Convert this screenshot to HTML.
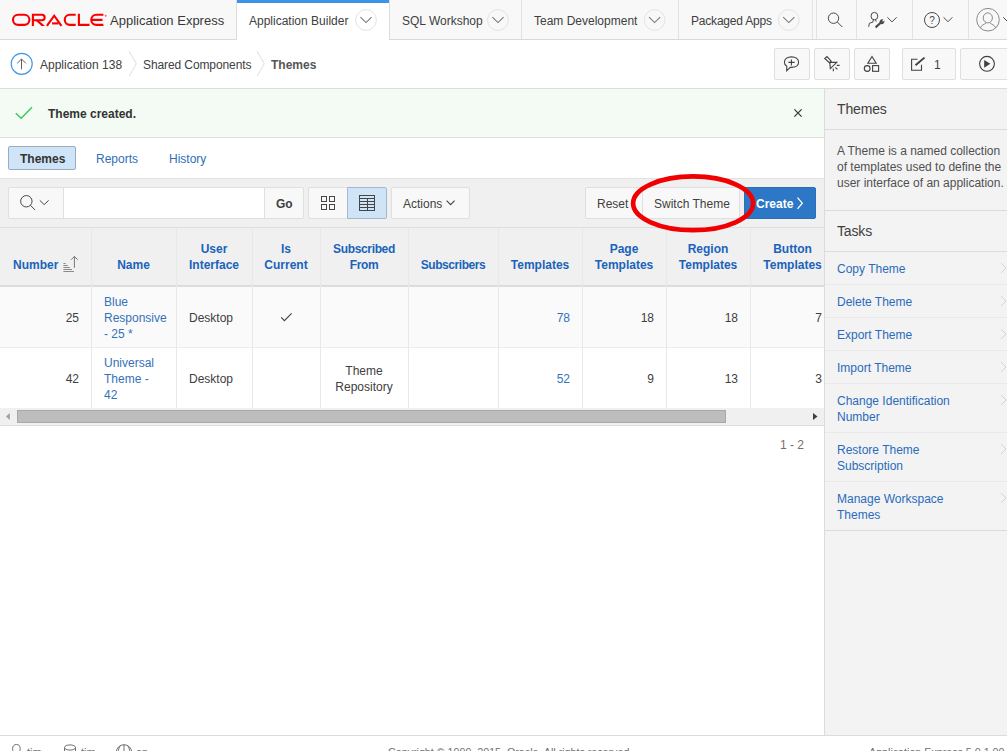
<!DOCTYPE html>
<html><head><meta charset="utf-8">
<style>
*{box-sizing:border-box;margin:0;padding:0}
html,body{width:1007px;height:751px;overflow:hidden;background:#fff;font-family:"Liberation Sans",sans-serif;font-size:12px;color:#404040}
.a{position:absolute}
.t{position:absolute;white-space:nowrap;line-height:16px}
.b{font-weight:bold}
svg{position:absolute;overflow:visible}
.btn{background:#f8f8f8;border:1px solid #dfdfdf;border-radius:2px}
.tl{position:absolute;left:837px;white-space:nowrap;line-height:16px;color:#2a6bbb}
.sep{left:825px;width:182px;height:1px;background:#e9e9e9}
.vl{top:228px;width:1px;height:180px;background:#e8e8e8}
.th{position:absolute;text-align:center;font-weight:bold;color:#1a63bb;line-height:16px;white-space:nowrap}
.td{position:absolute;line-height:16px;white-space:nowrap;color:#404040}
.td.r{text-align:right}
.td.c{text-align:center}
.lk{color:#3572b9}
</style></head><body>
<!-- HEADER -->
<div class="a" style="left:0;top:0;width:1007px;height:40px;background:#f8f8f8;border-bottom:1px solid #d9d9d9"></div>
<svg style="left:0;top:0" width="240" height="40" viewBox="0 0 240 40">
<g fill="none" stroke="#f80000" stroke-width="2.1">
<rect x="13" y="14.8" width="16.4" height="10.1" rx="5.05"/>
<path d="M32.9 13.75V25.95M32.9 14.8H41.95A2.7 2.7 0 0 1 41.95 20.2H33"/>
<path d="M46.9 25.95L54.2 15.7L61.5 25.95" stroke-linejoin="miter"/>
<path d="M52 23.4H58.6"/>
<path d="M75.7 14.8H69.8A5.05 5.05 0 0 0 69.8 24.9H75.7"/>
<path d="M78.9 13.75V24.9H89.5"/>
<path d="M103.4 14.8H96.3A5.05 5.05 0 0 0 96.3 24.9H103.4M91.5 19.85H102.5"/>
</g>
<polygon fill="#f80000" points="35.2,20.2 38.4,20.2 45,25.95 41.6,25.95"/>
<circle cx="105.7" cy="15.8" r="1" fill="#f86060"/>
</svg>
<div class="t" style="left:110px;top:13px;font-size:13px;color:#383838">Application Express</div>

<!-- active tab -->
<div class="a" style="left:236px;top:0;width:154px;height:40px;background:#fff;border-left:1px solid #dcdcdc;border-right:1px solid #dcdcdc"></div>
<div class="a" style="left:237px;top:0;width:152px;height:3px;background:#3b93e6"></div>
<div class="t" style="left:249px;top:13px">Application Builder</div>
<div class="t" style="left:402px;top:13px">SQL Workshop</div>
<div class="t" style="left:534px;top:13px">Team Development</div>
<div class="t" style="left:691px;top:13px;letter-spacing:-0.2px">Packaged Apps</div>
<div class="a" style="left:521px;top:0;width:1px;height:39px;background:#e2e2e2"></div>
<div class="a" style="left:678px;top:0;width:1px;height:39px;background:#e2e2e2"></div>
<div class="a" style="left:812px;top:0;width:1px;height:39px;background:#e2e2e2"></div>
<div class="a" style="left:816px;top:0;width:1px;height:39px;background:#e2e2e2"></div>
<div class="a" style="left:856px;top:0;width:1px;height:39px;background:#e2e2e2"></div>
<div class="a" style="left:912px;top:0;width:1px;height:39px;background:#e2e2e2"></div>
<div class="a" style="left:968px;top:0;width:1px;height:39px;background:#e2e2e2"></div>
<svg style="left:0;top:0" width="1007" height="40" viewBox="0 0 1007 40">
<g fill="none" stroke="#e4e4e4" stroke-width="1">
<circle cx="366" cy="20" r="10.4"/>
<circle cx="498" cy="20" r="10.4"/>
<circle cx="654.6" cy="20" r="10.4"/>
<circle cx="788.8" cy="20" r="10.4"/>
</g>
<g fill="none" stroke="#7a7a7a" stroke-width="1.1">
<path d="M360.4 17.2L366 22.6L371.6 17.2"/>
<path d="M492.4 17.2L498 22.6L503.6 17.2"/>
<path d="M649 17.2L654.6 22.6L660.2 17.2"/>
<path d="M783.2 17.2L788.8 22.6L794.4 17.2"/>
</g>
<g fill="none" stroke="#4a4a4a" stroke-width="1">
<circle cx="833.5" cy="18.2" r="5.2"/>
<path d="M837.3 22L842.3 27"/>
<ellipse cx="874.4" cy="16.1" rx="3.4" ry="3.7"/>
<path d="M873.3 20L872.8 22.2L869.4 23.2L868.7 26.8M875.6 20L876.2 21.6"/>
<path d="M887.4 17.3L892 21.9L896.6 17.3"/>
<circle cx="932" cy="20" r="7.5"/>
<path d="M943.6 17.3L948 21.7L952.4 17.3"/>
<path d="M1003.3 17.3L1007.7 21.7"/>
</g>
<path d="M875.6 27.4L880.7 22.7" stroke="#4a4a4a" stroke-width="2.2" fill="none"/>
<path d="M879.8 23A2.6 2.6 0 0 1 883.4 19.6L882.2 21L883 21.8L884.3 20.6A2.6 2.6 0 0 1 880.6 23.8Z" fill="#4a4a4a"/>
<text x="932" y="23.9" font-family="Liberation Sans" font-size="10" text-anchor="middle" fill="#4a4a4a">?</text>
<g fill="none" stroke="#8a8a8a" stroke-width="1">
<circle cx="988" cy="19.7" r="11.3"/>
<ellipse cx="987.8" cy="17.9" rx="4.6" ry="5"/>
<path d="M980.3 27.9C981.5 25 984 24.6 986 23M995.8 27.9C994.5 25 992 24.6 990 23"/>
</g>
</svg>

<!-- BREADCRUMB -->
<div class="a" style="left:0;top:88px;width:1007px;height:1px;background:#dcdcdc"></div>
<div class="t" style="left:40px;top:57px">Application 138</div>
<div class="t" style="left:143px;top:57px;letter-spacing:-0.1px">Shared Components</div>
<div class="t b" style="left:271px;top:57px;color:#555">Themes</div>
<svg style="left:0;top:40px" width="1007" height="48" viewBox="0 40 1007 48">
<circle cx="21.7" cy="63.8" r="10.5" fill="none" stroke="#4296e4" stroke-width="1.15"/>
<path d="M21.5 69.3V59M17.2 63.3L21.5 59L25.8 63.3" fill="none" stroke="#606060" stroke-width="1"/>
<path d="M129.3 51.4L136.3 63.8L129.3 76M257.2 51.4L264.3 63.8L257.2 76" fill="none" stroke="#dedede" stroke-width="1"/>
</svg>
<div class="a btn" style="left:774px;top:48px;width:36px;height:32px"></div>
<div class="a btn" style="left:814px;top:48px;width:36px;height:32px"></div>
<div class="a btn" style="left:854px;top:48px;width:36px;height:32px"></div>
<div class="a btn" style="left:902px;top:48px;width:54px;height:32px"></div>
<div class="a btn" style="left:960px;top:48px;width:60px;height:32px"></div>
<svg style="left:0;top:40px" width="1007" height="48" viewBox="0 40 1007 48">
<g fill="none" stroke="#404040" stroke-width="1.1">
<path d="M786.8 66.3C784.8 65.2 784.4 63.8 784.4 62.2C784.4 58.9 787.6 56.9 791.5 56.9C795.4 56.9 798.6 58.9 798.6 62.2C798.6 65.5 795.4 67.4 791.5 67.4L790.3 67.4L786.7 70.8Z"/>
<path d="M788.4 62.4H794.6M791.4 59.4V65.4"/>
<path d="M824.8 58.5L827 56.6L831.2 61.2L829.6 62.9Z"/>
<path d="M829.8 62.4L836.8 62.3L830.3 68.6Z"/>
<path d="M836.8 65.4H839.6M835.3 67.3L837.4 69.3M833.3 68.5V71.2"/>
<path d="M872 56.5L876.2 63.3H867.8Z"/>
<circle cx="867.2" cy="68.5" r="2.9"/>
<rect x="872.6" y="65.6" width="6" height="5.7"/>
<path d="M917.5 59.3H911.6V70.3H921.5V64.7"/>
<path d="M962 63.8" />
<circle cx="987" cy="63.8" r="7.4"/>
</g>
<path d="M915.5 65.3L924.5 57.6" stroke="#404040" stroke-width="1.9" fill="none"/>
<path d="M984.2 60L990.3 63.8L984.2 67.7Z" fill="#404040"/>
</svg>
<div class="t" style="left:934px;top:57px">1</div>

<!-- RIGHT PANEL -->
<div class="a" style="left:824px;top:89px;width:183px;height:646px;background:#f3f3f3;border-left:1px solid #dcdcdc"></div>
<div class="t" style="left:837px;top:101px;font-size:14px;letter-spacing:-0.15px;color:#404040">Themes</div>
<div class="a" style="left:825px;top:129px;width:182px;height:1px;background:#dcdcdc"></div>
<div class="t" style="left:837px;top:143px;color:#505050">A Theme is a named collection</div>
<div class="t" style="left:837px;top:159px;color:#505050">of templates used to define the</div>
<div class="t" style="left:837px;top:175px;color:#505050">user interface of an application.</div>
<div class="a" style="left:825px;top:210px;width:182px;height:1px;background:#dcdcdc"></div>
<div class="t" style="left:837px;top:223px;font-size:14px;letter-spacing:-0.15px;color:#404040">Tasks</div>
<div class="a" style="left:825px;top:251px;width:182px;height:1px;background:#dcdcdc"></div>
<div class="tl" style="top:261px">Copy Theme</div>
<div class="a sep" style="top:284px"></div>
<div class="tl" style="top:294px">Delete Theme</div>
<div class="a sep" style="top:317px"></div>
<div class="tl" style="top:327px">Export Theme</div>
<div class="a sep" style="top:350px"></div>
<div class="tl" style="top:360px">Import Theme</div>
<div class="a sep" style="top:383px"></div>
<div class="tl" style="top:393px">Change Identification<br>Number</div>
<div class="a sep" style="top:432px"></div>
<div class="tl" style="top:442px">Restore Theme<br>Subscription</div>
<div class="a sep" style="top:481px"></div>
<div class="tl" style="top:491px">Manage Workspace<br>Themes</div>
<div class="a" style="left:825px;top:530px;width:182px;height:1px;background:#dcdcdc"></div>
<svg style="left:990px;top:250px" width="17" height="280" viewBox="990 250 17 280">
<path d="M1001 263L1006 268L1001 273M1001 296L1006 301L1001 306M1001 329L1006 334L1001 339M1001 362L1006 367L1001 372M1001 395L1006 400L1001 405M1001 444L1006 449L1001 454M1001 493L1006 498L1001 503" fill="none" stroke="#d4d4d4" stroke-width="1"/>
</svg>

<!-- ALERT -->
<div class="a" style="left:0;top:89px;width:824px;height:49px;background:#f4fbf4;border-bottom:1px solid #dfdfdf"></div>
<div class="t b" style="left:48px;top:106px;color:#333">Theme created.</div>
<svg style="left:0;top:89px" width="824" height="49" viewBox="0 89 824 49">
<path d="M15.8 113.3L21.2 118.2L32 107.2" fill="none" stroke="#3ec85a" stroke-width="1.5"/>
<path d="M794.4 109.4L801.6 116.6M801.6 109.4L794.4 116.6" fill="none" stroke="#333" stroke-width="1.2"/>
</svg>

<!-- TABS -->
<div class="a" style="left:8px;top:146px;width:68px;height:24px;background:#d0e4f8;border:1px solid #97adc4;border-radius:2px"></div>
<div class="t b" style="left:20px;top:151px;color:#333">Themes</div>
<div class="t" style="left:96px;top:151px;color:#2f6fb7">Reports</div>
<div class="t" style="left:169px;top:151px;color:#2f6fb7">History</div>

<!-- TOOLBAR -->
<div class="a" style="left:0;top:178px;width:824px;height:49px;background:#f0f0f0;border-top:1px solid #e2e2e2"></div>
<div class="a btn" style="left:8px;top:187px;width:56px;height:32px;border-radius:2px 0 0 2px"></div>
<div class="a" style="left:63px;top:187px;width:202px;height:32px;background:#fff;border:1px solid #dfdfdf"></div>
<div class="a btn" style="left:264px;top:187px;width:40px;height:32px;border-radius:0 2px 2px 0"></div>
<div class="t b" style="left:276px;top:196px;color:#404040">Go</div>
<div class="a btn" style="left:308px;top:187px;width:40px;height:32px;border-radius:2px 0 0 2px"></div>
<div class="a" style="left:347px;top:187px;width:40px;height:32px;background:#d0e4f8;border:1px solid #a3b8cf;border-radius:0 2px 2px 0"></div>
<div class="a btn" style="left:391px;top:187px;width:79px;height:32px"></div>
<div class="t" style="left:403px;top:196px;color:#404040">Actions</div>
<div class="a btn" style="left:585px;top:187px;width:58px;height:32px"></div>
<div class="t" style="left:597px;top:196px;color:#404040">Reset</div>
<div class="a btn" style="left:642px;top:187px;width:98px;height:32px"></div>
<div class="t" style="left:654px;top:196px;color:#404040">Switch Theme</div>
<div class="a" style="left:744px;top:187px;width:72px;height:32px;background:#2d78c6;border:1px solid #2a6fb8;border-radius:2px"></div>
<div class="t b" style="left:756px;top:196px;color:#fff">Create</div>
<svg style="left:0;top:178px" width="824" height="49" viewBox="0 178 824 49">
<g fill="none" stroke="#454545" stroke-width="1">
<circle cx="26.35" cy="201.25" r="5.7"/>
<path d="M30.4 205.3L35 209.9"/>
<path d="M39.8 200.4L44.2 204.6L48.6 200.4"/>
</g><g fill="none" stroke="#454545" stroke-width="1">
<rect x="321.5" y="196.5" width="5" height="5"/>
<rect x="329.5" y="196.5" width="5" height="5"/>
<rect x="321.5" y="204.5" width="5" height="5"/>
<rect x="329.5" y="204.5" width="5" height="5"/>
<rect x="359.5" y="195.5" width="15" height="15"/>
<path d="M359.5 198.5H374.5M359.5 201.5H374.5M359.5 204.5H374.5M359.5 207.5H374.5M367.5 198.5V210.5"/>
</g><g fill="none" stroke="#454545" stroke-width="1.1">
<path d="M446.6 200.6L450.6 204.6L454.6 200.6"/>
</g>

<path d="M797.5 197.6L802.3 203.2L797.5 208.8" fill="none" stroke="#fff" stroke-width="1.3"/>
</svg>

<!-- TABLE -->
<div class="a" style="left:0;top:227px;width:824px;height:60px;background:#f0f0f0;border-top:1px solid #dedede;border-bottom:2px solid #dcdcdc"></div>
<div class="a" style="left:0;top:287px;width:824px;height:61px;background:#fafafa;border-bottom:1px solid #ededed"></div>
<div class="a" style="left:0;top:348px;width:824px;height:60px;background:#fff"></div>
<div class="a vl" style="left:91px"></div>
<div class="a vl" style="left:176px"></div>
<div class="a vl" style="left:252px"></div>
<div class="a vl" style="left:320px"></div>
<div class="a vl" style="left:408px"></div>
<div class="a vl" style="left:498px"></div>
<div class="a vl" style="left:582px"></div>
<div class="a vl" style="left:666px"></div>
<div class="a vl" style="left:750px"></div>

<div class="th" style="left:0;width:79px;top:257px;text-align:left;padding-left:13px">Number</div>
<div class="th" style="left:91px;width:85px;top:257px">Name</div>
<div class="th" style="left:176px;width:76px;top:241px">User<br>Interface</div>
<div class="th" style="left:252px;width:68px;top:241px">Is<br>Current</div>
<div class="th" style="left:320px;width:88px;top:241px;letter-spacing:-0.35px">Subscribed<br>From</div>
<div class="th" style="left:408px;width:90px;top:257px;letter-spacing:-0.45px">Subscribers</div>
<div class="th" style="left:498px;width:84px;top:257px">Templates</div>
<div class="th" style="left:582px;width:84px;top:241px">Page<br>Templates</div>
<div class="th" style="left:666px;width:84px;top:241px">Region<br>Templates</div>
<div class="th" style="left:750px;width:85px;top:241px">Button<br>Templates</div>
<svg style="left:60px;top:250px" width="22" height="26" viewBox="60 250 22 26">
<path d="M63.4 263.5H65.7M63.4 265.5H67.8M63.4 267.5H69.9M63.4 269.5H72M63.4 271.5H74" stroke="#8a8a8a" stroke-width="1"/>
<path d="M74.4 267.8V256.4M71.1 259.7L74.4 256.4L77.7 259.7" fill="none" stroke="#777" stroke-width="1"/>
</svg>

<div class="td r" style="left:0;width:79px;top:310px">25</div>
<div class="td lk" style="left:104px;top:294px;line-height:16px">Blue<br>Responsive<br>- 25 *</div>
<div class="td" style="left:189px;top:310px">Desktop</div>
<svg style="left:270px;top:300px" width="30" height="30" viewBox="270 300 30 30">
<path d="M281.2 317.4L284.4 320.6L291.6 313.4" fill="none" stroke="#404040" stroke-width="1.1"/>
</svg>
<div class="td r lk" style="left:498px;width:72px;top:310px">78</div>
<div class="td r" style="left:582px;width:72px;top:310px">18</div>
<div class="td r" style="left:666px;width:72px;top:310px">18</div>
<div class="td r" style="left:750px;width:72px;top:310px">7</div>

<div class="td r" style="left:0;width:79px;top:371px">42</div>
<div class="td lk" style="left:104px;top:355px;line-height:16px">Universal<br>Theme -<br>42</div>
<div class="td" style="left:189px;top:371px">Desktop</div>
<div class="td c" style="left:320px;width:88px;top:363px;line-height:16px">Theme<br>Repository</div>
<div class="td r lk" style="left:498px;width:72px;top:371px">52</div>
<div class="td r" style="left:582px;width:72px;top:371px">9</div>
<div class="td r" style="left:666px;width:72px;top:371px">13</div>
<div class="td r" style="left:750px;width:72px;top:371px">3</div>

<!-- scrollbar -->
<div class="a" style="left:0;top:408px;width:824px;height:18px;background:#f0f0f0;border-bottom:1px solid #dcdcdc"></div>
<div class="a" style="left:17px;top:410px;width:709px;height:13px;background:#bdbdbd;border:1px solid #a9a9a9"></div>
<svg style="left:0;top:408px" width="824" height="18" viewBox="0 408 824 18">
<path d="M6 416.5L9.8 413V420Z" fill="#a0a0a0"/>
<path d="M813 412.9L817.5 416.4L813 420Z" fill="#404040"/>
</svg>
<div class="t" style="left:780px;top:437px;color:#707070">1 - 2</div>

<!-- FOOTER -->
<div class="a" style="left:0;top:735px;width:1007px;height:1px;background:#dcdcdc"></div>
<svg style="left:0;top:736px" width="200" height="15" viewBox="0 736 200 15">
<g fill="none" stroke="#707070" stroke-width="1">
<ellipse cx="16.4" cy="748.8" rx="3.8" ry="4.3"/>
<ellipse cx="70" cy="747.5" rx="5.5" ry="2.6"/>
<path d="M64.5 747.5V756M75.5 747.5V756"/>
<circle cx="124" cy="752.5" r="7.8"/>
<path d="M124 744.7V760M120.5 745.5C117.5 749 117.5 756 120.5 759.5M127.5 745.5C130.5 749 130.5 756 127.5 759.5"/>
</g>
</svg>
<div class="t" style="left:27px;top:744px;font-size:11px;color:#707070">tim</div>
<div class="t" style="left:81px;top:744px;font-size:11px;color:#707070">tim</div>
<div class="t" style="left:136px;top:744px;font-size:11px;color:#707070">en</div>
<div class="t" style="left:388px;top:744px;font-size:10.7px;color:#707070">Copyright © 1999, 2015, Oracle. All rights reserved.</div>
<div class="t" style="left:869px;top:744px;font-size:10.7px;color:#707070">Application Express 5.0.1.00.06</div>

<!-- RED ELLIPSE -->
<svg style="left:0;top:0" width="1007" height="751" viewBox="0 0 1007 751">
<ellipse cx="693.1" cy="203.3" rx="60" ry="26.9" fill="none" stroke="#f00000" stroke-width="4.7"/>
</svg>

</body></html>
